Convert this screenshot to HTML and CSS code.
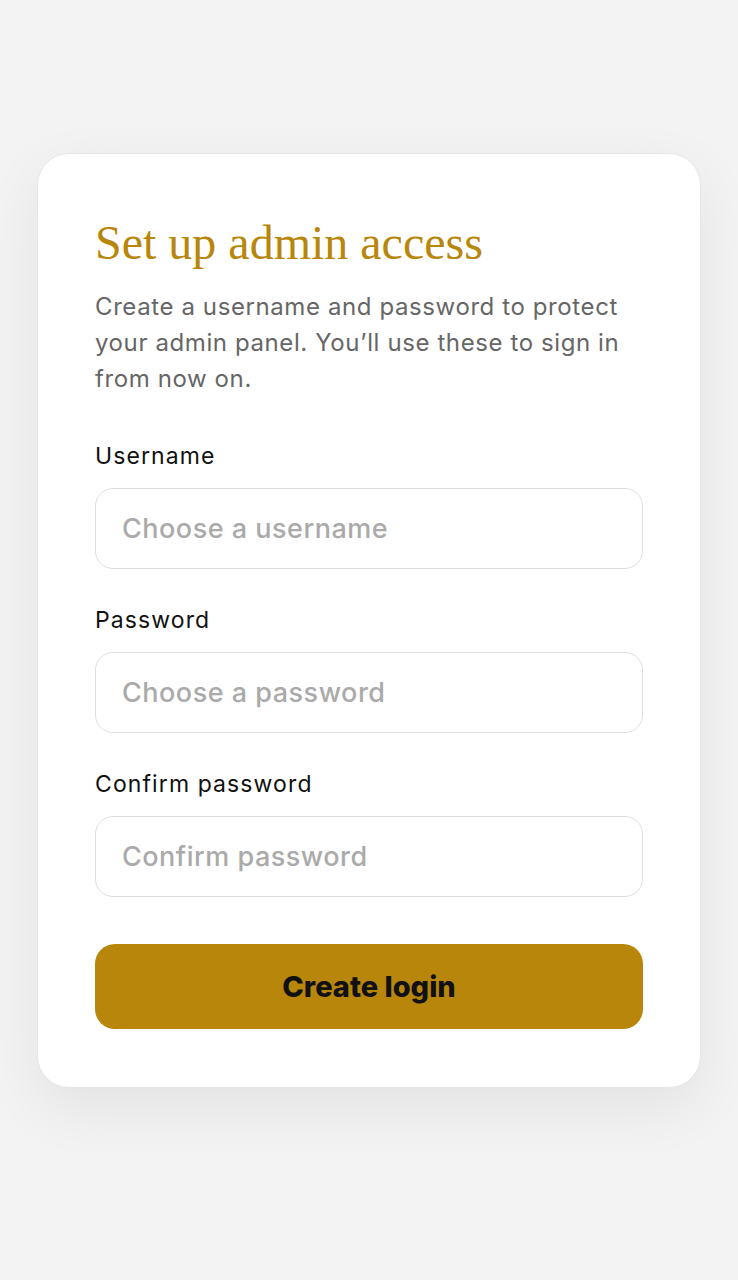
FILE: index.html
```html
<!DOCTYPE html>
<html lang="en">
<head>
    <meta charset="UTF-8">
    <meta name="viewport" content="width=device-width, initial-scale=1.0">
    <title>Set up admin access</title>
    <link rel="stylesheet" href="styles.css">
</head>
<body>
    <div class="card">
        <h1 class="title">Set up admin access</h1>
        <p class="intro">Create a username and password to protect your admin panel. You’ll use these to sign in from now on.</p>

        <form class="setup-form">
            <div class="field">
                <label for="username">Username</label>
                <input id="username" type="text" placeholder="Choose a username">
            </div>
            <div class="field">
                <label for="password">Password</label>
                <input id="password" type="password" placeholder="Choose a password">
            </div>
            <div class="field">
                <label for="confirm">Confirm password</label>
                <input id="confirm" type="password" placeholder="Confirm password">
            </div>
            <button type="button" class="submit">Create login</button>
        </form>
    </div>
</body>
</html>
```

FILE: styles.css
```css
html {
    background-color: #f3f3f3;
}
body {
    margin: 0;
    min-height: 100vh;
    padding: 153px 37px 0;
    box-sizing: border-box;
    font-family: Inter, "Noto Sans", sans-serif;
}
.card {
    background-color: white;
    border: 1px solid #e6e6e6;
    border-radius: 32px;
    padding: 59px 57px 58px;
    box-shadow: 0 20px 60px rgba(0, 0, 0, 0.07);
}
.title {
    margin: 0;
    font-family: "Liberation Serif", serif;
    font-weight: normal;
    font-size: 48px;
    line-height: 60px;
    color: #b8860b;
}
.intro {
    margin: 16px 0 0;
    font-size: 24px;
    letter-spacing: 0.6px;
    line-height: 36px;
    color: #666;
}
.setup-form {
    margin-top: 44px;
}
.field {
    margin-bottom: 36px;
}
.field label {
    display: block;
    font-size: 23px;
    letter-spacing: 1.1px;
    line-height: 30px;
    color: #111;
    margin-bottom: 17px;
}
.field input {
    display: block;
    box-sizing: border-box;
    width: 100%;
    height: 81px;
    padding: 0 26px;
    border: 1.5px solid #dedede;
    border-radius: 18px;
    font-family: Inter, sans-serif;
    font-size: 27px;
    letter-spacing: 0.5px;
    color: #222;
    outline: none;
}
.field input::placeholder {
    color: #aaa;
    font-weight: 500;
}
.submit {
    display: block;
    width: 100%;
    height: 85px;
    margin-top: 47px;
    border: none;
    border-radius: 20px;
    background-color: #b8860b;
    font-family: Inter, sans-serif;
    font-size: 29px;
    font-weight: 800;
    color: #111;
    cursor: pointer;
}
```
